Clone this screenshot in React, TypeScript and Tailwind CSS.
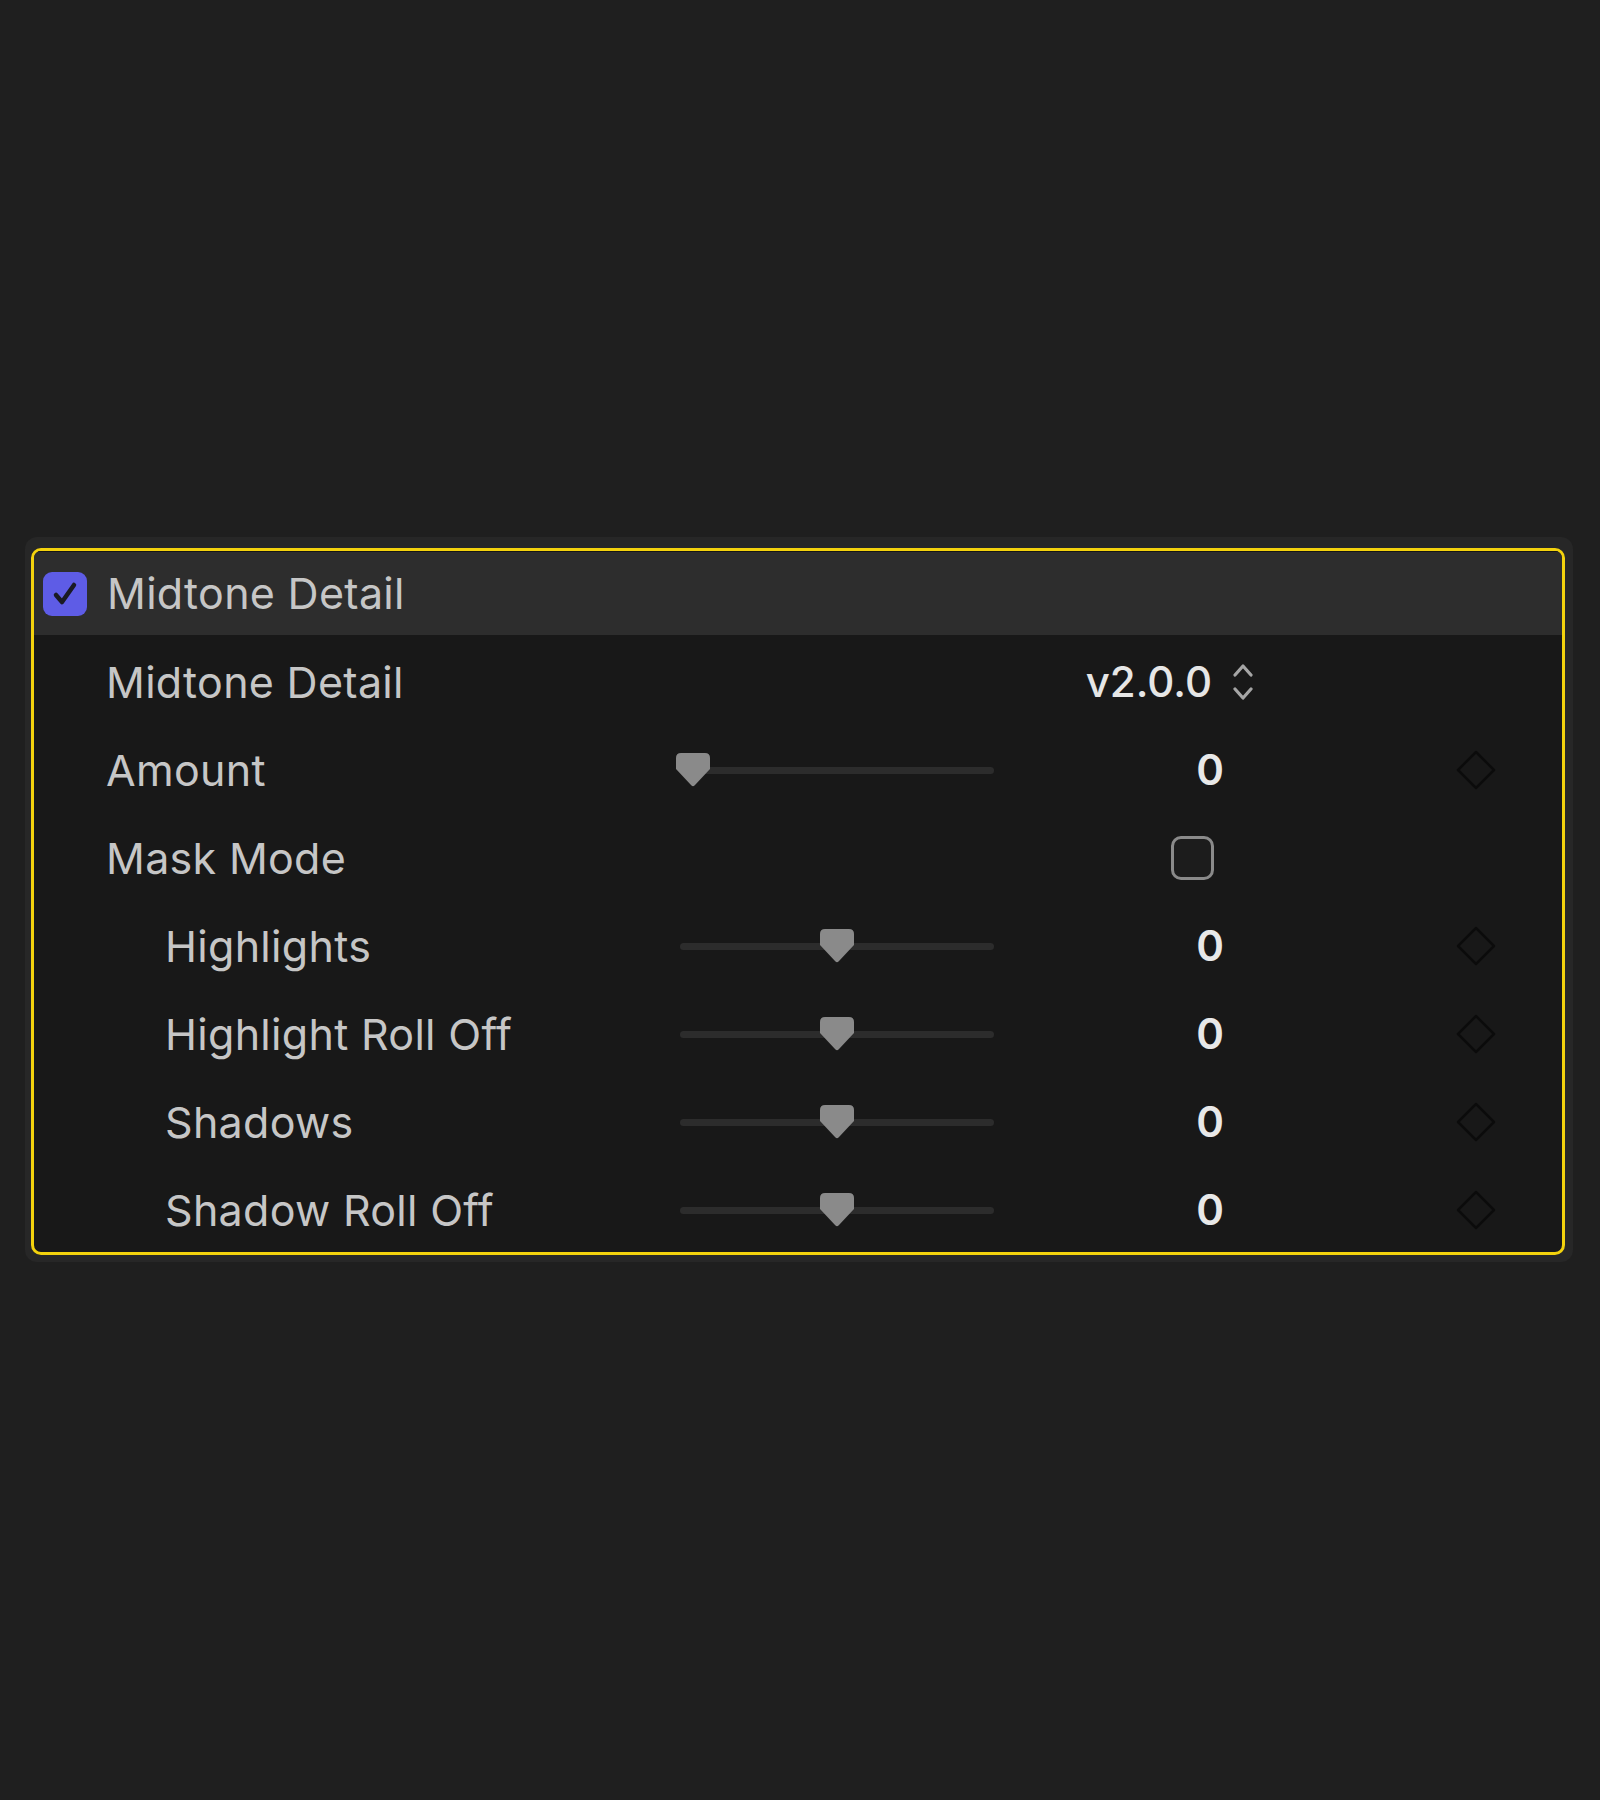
import React from "react";

const FONT = { fontFamily: "Inter, 'Noto Sans', 'Liberation Sans', sans-serif" };

function Thumb() {
  return (
    <svg width="34" height="34" viewBox="0 0 34 34" className="block">
      <path
        d="M5 0 H29 Q34 0 34 5 V16 L18.5 32.5 Q17 34 15.5 32.5 L0 16 V5 Q0 0 5 0 Z"
        fill="#8a8a8a"
      />
    </svg>
  );
}

function Slider({ p }: { p: number }) {
  return (
    <div className="relative w-[322px] h-[34px] shrink-0">
      <div className="absolute left-[4px] right-[4px] top-[14px] h-[7px] rounded-full bg-[#2c2c2c]" />
      <div className="absolute top-0" style={{ left: `${p * 288}px` }}>
        <Thumb />
      </div>
    </div>
  );
}

function Diamond() {
  return (
    <svg width="40" height="40" viewBox="0 0 40 40" className="block">
      <path d="M20 2 L38 20 L20 38 L2 20 Z" fill="none" stroke="#0b0b0b" strokeWidth="2.5" strokeLinejoin="round" />
    </svg>
  );
}

const LABEL = "shrink-0 text-[43px] tracking-[0.3px] leading-none text-[#c6c6c6]";

function SliderRow({ label, indent, p }: { label: string; indent: boolean; p: number }) {
  return (
    <div className="flex items-center h-[88px] shrink-0">
      <div className={`w-[642px] ${LABEL} ${indent ? "pl-[131px]" : "pl-[72px]"}`}>{label}</div>
      <Slider p={p} />
      <div className="w-[226px] shrink-0 flex justify-end text-[42px] leading-none font-semibold text-[#e8e8e8]">0</div>
      <div className="ml-[232px]">
        <Diamond />
      </div>
    </div>
  );
}

export default function App() {
  return (
    <div className="w-full h-[1800px] bg-[#1f1f1f] pt-[537px] pl-[25px]" style={FONT}>
      <div className="w-[1548px] h-[725px] rounded-[12px] bg-[#272727] pt-[11px] pl-[6px]">
        <div className="w-[1534px] h-[707px] rounded-[10px] border-[3px] border-[#f3d20d] bg-[#181818] overflow-hidden flex flex-col">
          {/* Header */}
          <div className="h-[84px] shrink-0 bg-[#2d2d2d] flex items-center pl-[9px] border-t border-[#161616]">
            <div className="w-[44px] h-[44px] rounded-[9px] bg-[#5e5ce6] flex items-center justify-center">
              <svg width="28" height="28" viewBox="0 0 28 28">
                <path d="M5 15 L11 22 L23 5" fill="none" stroke="#1a1a24" strokeWidth="4.5" strokeLinecap="round" strokeLinejoin="round" />
              </svg>
            </div>
            <div className={`ml-[20px] ${LABEL}`}>Midtone Detail</div>
          </div>

          <div className="flex flex-col pt-[3px]">
            {/* Midtone Detail version row */}
            <div className="flex items-center h-[88px] shrink-0">
              <div className={`w-[642px] pl-[72px] ${LABEL}`}>Midtone Detail</div>
              <div className="w-[322px] shrink-0" />
              <div className="w-[214px] shrink-0 flex justify-end text-[42px] leading-none font-medium text-[#e6e6e6]">v2.0.0</div>
              <div className="ml-[21px]">
                <svg width="20" height="38" viewBox="0 0 20 38" className="block">
                  <path d="M2 12 L10 3 L18 12" fill="none" stroke="#a5a5a5" strokeWidth="3.2" strokeLinecap="round" strokeLinejoin="round" />
                  <path d="M2 26 L10 35 L18 26" fill="none" stroke="#a5a5a5" strokeWidth="3.2" strokeLinecap="round" strokeLinejoin="round" />
                </svg>
              </div>
            </div>

            {/* Amount */}
            <SliderRow label="Amount" indent={false} p={0} />

            {/* Mask Mode */}
            <div className="flex items-center h-[88px] shrink-0">
              <div className={`w-[642px] pl-[72px] ${LABEL}`}>Mask Mode</div>
              <div className="w-[322px] shrink-0" />
              <div className="w-[216px] shrink-0 flex justify-end">
                <div className="w-[43px] h-[44px] rounded-[10px] border-[3px] border-[#8a8a8a] bg-[#1c1c1c]" />
              </div>
            </div>

            <SliderRow label="Highlights" indent={true} p={0.5} />
            <SliderRow label="Highlight Roll Off" indent={true} p={0.5} />
            <SliderRow label="Shadows" indent={true} p={0.5} />
            <SliderRow label="Shadow Roll Off" indent={true} p={0.5} />
          </div>
        </div>
      </div>
    </div>
  );
}
